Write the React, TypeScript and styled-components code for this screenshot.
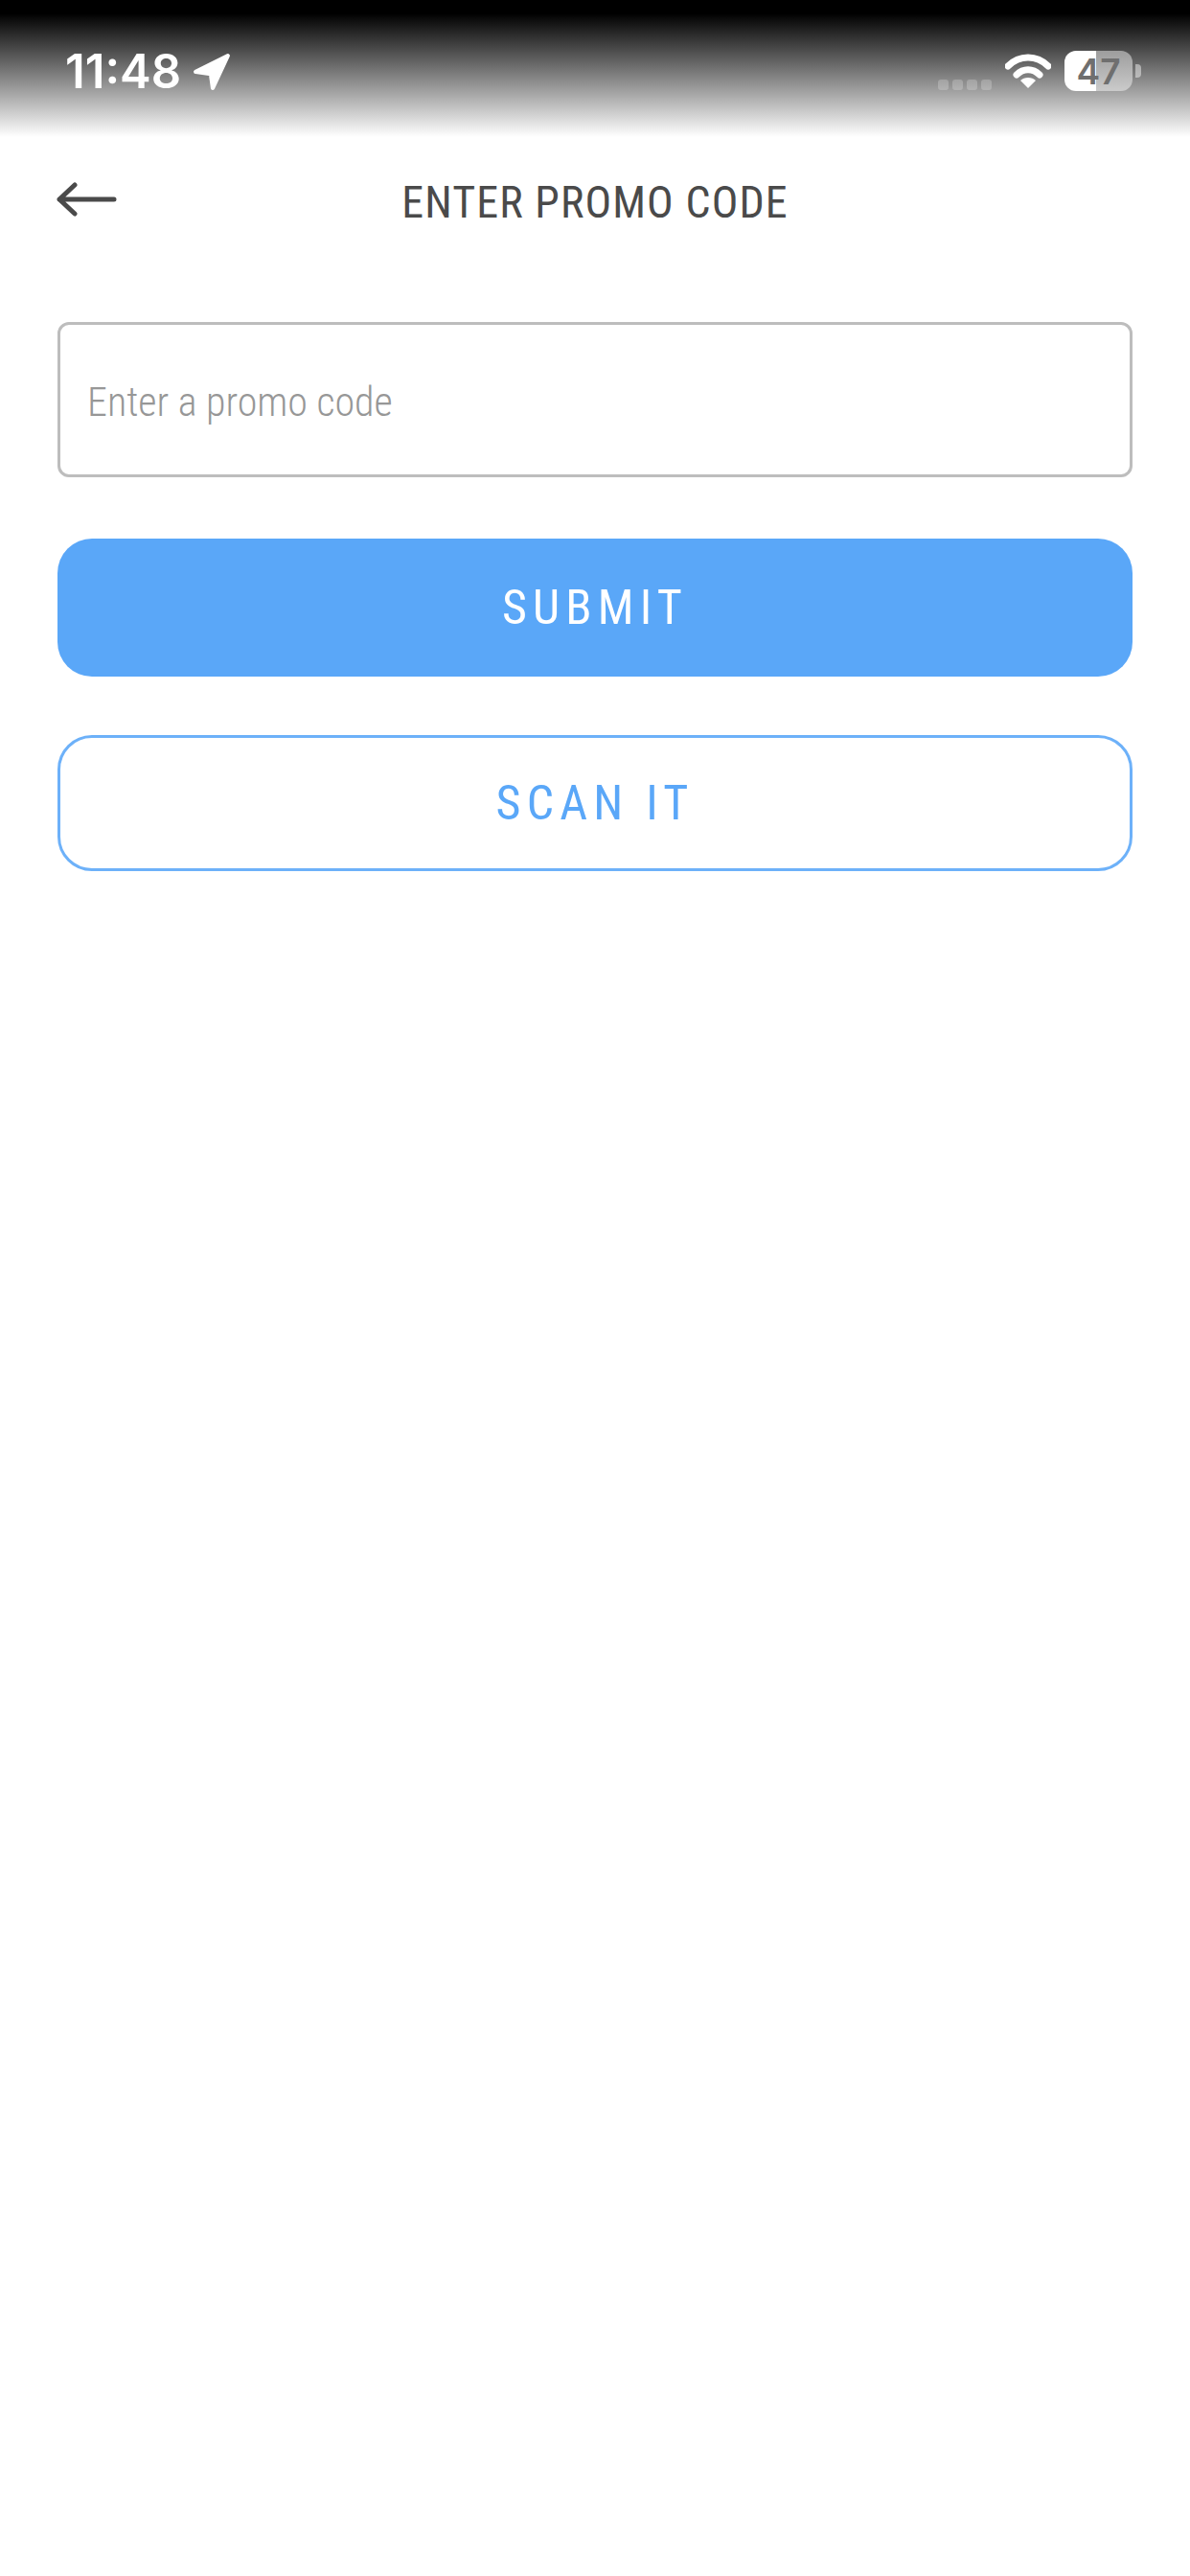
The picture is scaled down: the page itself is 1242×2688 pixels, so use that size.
import React from 'react';
import styled, { createGlobalStyle } from 'styled-components';

const GlobalStyle = createGlobalStyle`
  html, body {
    margin: 0;
    padding: 0;
    background: #ffffff;
  }
  * {
    box-sizing: border-box;
  }
`;

const Page = styled.div`
  width: 1242px;
  height: 2688px;
  background: #ffffff;
  font-family: Roboto, "Liberation Sans", sans-serif;
`;

const StatusBar = styled.div`
  height: 143px;
  padding: 53px 51px 0 68px;
  display: flex;
  align-items: flex-start;
  justify-content: space-between;
  background: linear-gradient(to bottom, #000000 0, #000000 14px, #ffffff 143px);
`;

const StatusLeft = styled.div`
  display: flex;
  align-items: center;
  gap: 12px;
`;

const Clock = styled.span`
  font-family: Inter, sans-serif;
  font-size: 49px;
  line-height: 44px;
  font-weight: 600;
  color: #ffffff;
`;

const StatusRight = styled.div`
  display: flex;
  align-items: center;
`;

const Signal = styled.div`
  display: flex;
  gap: 4px;
  margin: 28px 14px 0 0;
`;

const SignalDot = styled.span`
  width: 11px;
  height: 11px;
  border-radius: 3px;
  background: rgba(255, 255, 255, 0.22);
`;

const Battery = styled.div`
  width: 71px;
  height: 42px;
  margin-left: 14px;
  border-radius: 12px;
  display: flex;
  align-items: center;
  justify-content: center;
  background: linear-gradient(to right, #ffffff 47%, rgba(255, 255, 255, 0.45) 47%);
  font-family: Inter, sans-serif;
  font-size: 37px;
  font-weight: 600;
  color: #6f6f6f;
`;

const BatteryNub = styled.span`
  width: 6px;
  height: 14px;
  margin-left: 3px;
  border-radius: 0 4px 4px 0;
  background: rgba(255, 255, 255, 0.45);
`;

const Header = styled.header`
  position: relative;
  height: 136px;
  display: flex;
  align-items: center;
  justify-content: center;
`;

const BackButton = styled.button`
  position: absolute;
  left: 59px;
  top: 47px;
  padding: 0;
  border: none;
  background: none;
  display: flex;
`;

const Title = styled.h1`
  margin: 0;
  font-size: 46px;
  font-weight: 400;
  font-stretch: 75%;
  letter-spacing: 1.1px;
  color: #4a4a4a;
`;

const Form = styled.form`
  padding: 57px 60px 0;
  display: flex;
  flex-direction: column;
`;

const Input = styled.input`
  width: 100%;
  height: 162px;
  padding: 4px 28px 0;
  border: 3px solid #bdbdbd;
  border-radius: 12px;
  background: #ffffff;
  font-family: Roboto, sans-serif;
  font-size: 42px;
  font-weight: 300;
  font-stretch: 75%;
  outline: none;

  &::placeholder {
    color: #979797;
    opacity: 1;
  }
`;

const Button = styled.button<{ $outline?: boolean }>`
  width: 100%;
  height: ${({ $outline }) => ($outline ? '142px' : '144px')};
  margin-top: ${({ $outline }) => ($outline ? '61px' : '64px')};
  border: ${({ $outline }) => ($outline ? '3px solid #6db1f9' : 'none')};
  border-radius: 36px;
  background: ${({ $outline }) => ($outline ? '#ffffff' : '#5aa7f8')};
  color: ${({ $outline }) => ($outline ? '#5aa7f8' : '#ffffff')};
  font-family: Roboto, sans-serif;
  font-size: 50px;
  font-weight: 400;
  font-stretch: 75%;
  letter-spacing: 6.2px;
`;

export default function App() {
  return (
    <Page>
      <GlobalStyle />
      <StatusBar>
        <StatusLeft>
          <Clock>11:48</Clock>
          <svg width="40" height="40" viewBox="0 0 38 38">
            <path
              d="M35 3 L3 19 L18 21 L20 35 Z"
              fill="#ffffff"
              stroke="#ffffff"
              strokeWidth="4"
              strokeLinejoin="round"
            />
          </svg>
        </StatusLeft>
        <StatusRight>
          <Signal>
            <SignalDot />
            <SignalDot />
            <SignalDot />
            <SignalDot />
          </Signal>
          <svg width="48" height="37" viewBox="0 0 48 37">
            <path d="M3 13 C15 1 33 1 45 13" fill="none" stroke="#fff" strokeWidth="7" strokeLinecap="round" />
            <path d="M12 22 C19 15 29 15 36 22" fill="none" stroke="#fff" strokeWidth="7" strokeLinecap="round" />
            <path d="M24 36 L16 28 C20 24 28 24 32 28 Z" fill="#fff" />
          </svg>
          <Battery>47</Battery>
          <BatteryNub />
        </StatusRight>
      </StatusBar>
      <Header>
        <BackButton type="button" aria-label="Back">
          <svg width="64" height="36" viewBox="0 0 64 36">
            <path
              d="M3 18 H60 M19 3 L3 18 L19 33"
              fill="none"
              stroke="#4a4a4a"
              strokeWidth="5"
              strokeLinecap="round"
              strokeLinejoin="round"
            />
          </svg>
        </BackButton>
        <Title>ENTER PROMO CODE</Title>
      </Header>
      <Form>
        <Input placeholder="Enter a promo code" />
        <Button type="button">SUBMIT</Button>
        <Button type="button" $outline>
          SCAN IT
        </Button>
      </Form>
    </Page>
  );
}
